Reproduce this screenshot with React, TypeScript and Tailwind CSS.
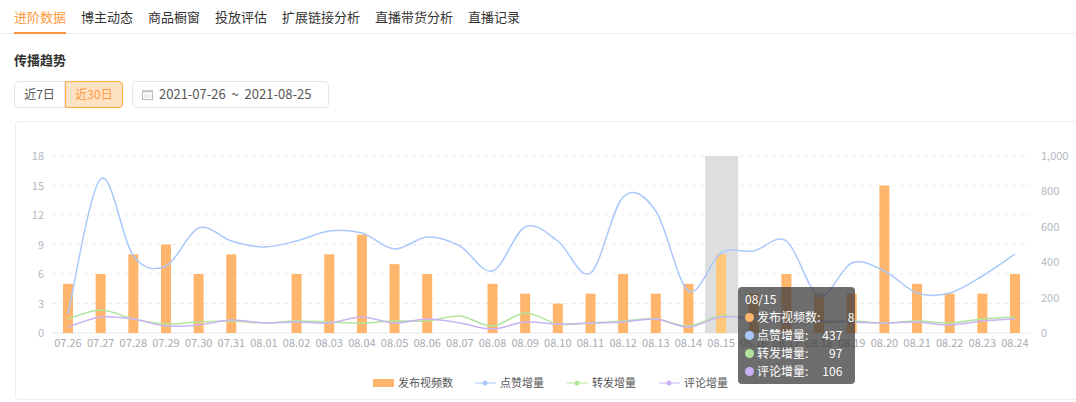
import React from "react";

const dates = ["07.26","07.27","07.28","07.29","07.30","07.31","08.01","08.02","08.03","08.04","08.05","08.06","08.07","08.08","08.09","08.10","08.11","08.12","08.13","08.14","08.15","08.16","08.17","08.18","08.19","08.20","08.21","08.22","08.23","08.24"];
const bars = [5,6,8,9,6,8,0,6,8,10,7,6,0,5,4,3,4,6,4,5,8,4,6,4,4,15,5,4,4,6];
const blue = [313,178,255,265,227,240,246,240,230,232,248,236,245,270,226,240,272,196,210,290,252,250,240,295,262,270,292,292,275,253];
const green = [318,309,318,323,321,320,322,320,321,322,320,320,315,325,312,323,322,320,318,325,315,318,321,322,320,322,320,322,318,316];
const purple = [326,316,318,325,324,319,322,321,322,316,322,318,322,328,321,323,322,321,318,326,316,318,322,320,321,322,321,324,320,318];

const X0 = 67, STEP = (1014 - 67) / 29, Y0 = 332, Y18 = 155;
const xs = dates.map((_, i) => X0 + i * STEP);

function smooth(ys: number[]) {
  const p = ys.map((y, i) => [xs[i], y]);
  let d = `M${p[0][0]},${p[0][1]}`;
  for (let i = 0; i < p.length - 1; i++) {
    const p0 = p[i - 1] || p[i], p1 = p[i], p2 = p[i + 1], p3 = p[i + 2] || p2;
    const c1 = [p1[0] + (p2[0] - p0[0]) / 6, p1[1] + (p2[1] - p0[1]) / 6];
    const c2 = [p2[0] - (p3[0] - p1[0]) / 6, p2[1] - (p3[1] - p1[1]) / 6];
    d += ` C${c1[0]},${c1[1]} ${c2[0]},${c2[1]} ${p2[0]},${p2[1]}`;
  }
  return d;
}

const tabs = ["进阶数据","博主动态","商品橱窗","投放评估","扩展链接分析","直播带货分析","直播记录"];
const font = { fontFamily: '"Microsoft YaHei","Noto Sans CJK SC",sans-serif' };

export default function App() {
  const u = (Y0 - Y18) / 18;
  return (
    <div className="w-[1076px] h-[402px] bg-white relative overflow-hidden text-[#333]" style={font}>
      <div className="flex gap-[15px] pl-[14px] h-[34px] border-b border-[#ebeef5] text-[13px] items-center">
        {tabs.map((t, i) => (
          <div key={t} className={`h-full flex items-center relative ${i === 0 ? "text-[#ff9a3c]" : "text-[#333]"}`}>
            {t}
            {i === 0 && <div className="absolute bottom-[-1px] left-0 right-0 h-[2px] bg-[#ff9a3c]" />}
          </div>
        ))}
      </div>
      <div className="pl-[14px] pt-[16px] text-[13px] font-bold text-[#333]">传播趋势</div>
      <div className="pl-[14px] pt-[11px] flex gap-[9px]">
        <div className="flex h-[27px] text-[12px]">
          <div className="w-[51px] flex items-center justify-center border border-[#e4e7ed] rounded-l text-[#555]">近7日</div>
          <div className="w-[58px] flex items-center justify-center border border-[#ffa94d] bg-[#ffe1c4] rounded-r text-[#ff9a3c]">近30日</div>
        </div>
        <div className="w-[197px] h-[27px] border border-[#e4e7ed] rounded flex items-center pl-[9px] gap-[6px] text-[13px] text-[#555]">
          <svg width="11" height="11" viewBox="0 0 11 11"><rect x="0.5" y="1.5" width="10" height="9" fill="none" stroke="#bbb"/><rect x="0.5" y="1.5" width="10" height="2" fill="#ccc"/><path d="M2 6h7M2 8h7" stroke="#ddd"/></svg>
          <span>2021-07-26 &nbsp;~&nbsp; 2021-08-25</span>
        </div>
      </div>
      <div className="absolute left-[15px] top-[121px] w-[1070px] h-[279px] border border-[#ebeef5] rounded">
        <svg width="1070" height="279" viewBox="15 121 1070 279" className="block">
          {[0,3,6,9,12,15,18].map(v => {
            const y = Y0 - v * u;
            return (
              <g key={v}>
                <line x1={51} x2={1030} y1={y} y2={y} stroke={v === 0 ? "#e8e8e8" : "#eeeeee"} strokeDasharray={v === 0 ? "" : "4 4"} />
                <text x={43} y={y + 4} textAnchor="end" fontSize="11" fill="#b5b8c2">{v}</text>
              </g>
            );
          })}
          {[0,200,400,600,800,1000].map(v => (
            <text key={v} x={1040} y={Y0 - (v / 1000) * (Y0 - Y18) + 4} fontSize="11" fill="#b5b8c2">{v === 1000 ? "1,000" : v}</text>
          ))}
          <rect x={xs[20] - 16} y={Y18} width={33} height={Y0 - Y18} fill="#dedede" />
          {bars.map((b, i) => b > 0 && (
            <rect key={i} x={xs[i] - 5} y={Y0 - b * u} width={10} height={b * u} fill={i === 20 ? "#ffc878" : "#ffb56b"} />
          ))}
          <path d={smooth(green)} fill="none" stroke="#b0e59b" strokeWidth="1.5" />
          <path d={smooth(purple)} fill="none" stroke="#c9b3f5" strokeWidth="1.5" />
          <path d={smooth(blue)} fill="none" stroke="#a9c8fb" strokeWidth="1.5" />
          {dates.map((d, i) => (
            <text key={d} x={xs[i]} y={346} textAnchor="middle" fontSize="11" fill="#a8abb3">{d}</text>
          ))}
          <g fontSize="11" fill="#555">
            <rect x={372} y={378} width={21} height={8} fill="#ffb56b" />
            <text x={397} y={386}>发布视频数</text>
            <line x1={474} x2={495} y1={382} y2={382} stroke="#a9c8fb" /><circle cx={484} cy={382} r={2.5} fill="#a9c8fb" />
            <text x={499} y={386}>点赞增量</text>
            <line x1={566} x2={587} y1={382} y2={382} stroke="#b0e59b" /><circle cx={576} cy={382} r={2.5} fill="#b0e59b" />
            <text x={591} y={386}>转发增量</text>
            <line x1={658} x2={679} y1={382} y2={382} stroke="#c9b3f5" /><circle cx={668} cy={382} r={2.5} fill="#c9b3f5" />
            <text x={683} y={386}>评论增量</text>
          </g>
        </svg>
      </div>
      <div className="absolute left-[738px] top-[287px] w-[117px] h-[97px] rounded bg-[rgba(60,60,60,0.75)] text-white text-[12px] pl-[7px] pt-[3px] leading-[18px]">
        <div>08/15</div>
        {[["#ffb56b","发布视频数:","8"],["#a9c8fb","点赞增量:","437"],["#b0e59b","转发增量:","97"],["#c9b3f5","评论增量:","106"]].map(([c,l,v]) => (
          <div key={l} className="flex items-center">
            <span className="w-[9px] h-[9px] rounded-full mr-[3px]" style={{ background: c }} />
            <span>{l}</span>
            <span className="w-[34px] text-right">{v}</span>
          </div>
        ))}
      </div>
    </div>
  );
}
